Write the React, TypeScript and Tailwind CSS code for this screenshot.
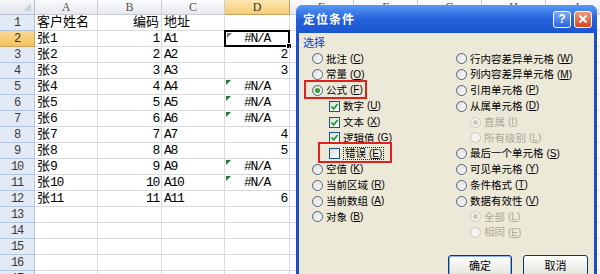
import React from 'react';

const cols = ['A', 'B', 'C', 'D', 'E', 'F', 'G', 'H', 'I'];

const data: string[][] = [
  ['客户姓名', '编码', '地址', ''],
  ['张1', '1', 'A1', '#N/A'],
  ['张2', '2', 'A2', '2'],
  ['张3', '3', 'A3', '3'],
  ['张4', '4', 'A4', '#N/A'],
  ['张5', '5', 'A5', '#N/A'],
  ['张6', '6', 'A6', '#N/A'],
  ['张7', '7', 'A7', '4'],
  ['张8', '8', 'A8', '5'],
  ['张9', '9', 'A9', '#N/A'],
  ['张10', '10', 'A10', '#N/A'],
  ['张11', '11', 'A11', '6'],
];

// ascii runs get squeezed to a half-width look like SimSun
const Txt: React.FC<{ s: string }> = ({ s }) => (
  <>
    {s.split(/([\x00-\x7f]+)/).map((p, i) =>
      /^[\x00-\x7f]+$/.test(p) ? (
        <span key={i} className="tracking-[-1.3px]">{p}</span>
      ) : (
        <span key={i}>{p}</span>
      )
    )}
  </>
);

const Sheet: React.FC = () => {
  const rows = Array.from({ length: 17 }, (_, i) => i + 1);
  return (
    <div className="grid grid-cols-[35px_63px_64px_63px_65px_64px_64px_64px_64px_64px] auto-rows-[16px] grid-rows-[15px] font-['Liberation_Mono','Noto_Sans_CJK_SC',monospace] text-[13px] leading-none text-black">
      {/* corner */}
      <div className="relative bg-gradient-to-b from-[#F4F6F8] to-[#E3E6EA] border-r border-b border-[#B7C3D3]">
        <div className="absolute right-[3px] bottom-[3px] w-0 h-0 border-b-[8px] border-l-[8px] border-b-[#C9D1DB] border-l-transparent" />
      </div>
      {cols.map((c) => (
        <div
          key={c}
          className={`flex items-center justify-center border-r border-b font-['Liberation_Serif',serif] text-[12px] ${
            c === 'D'
              ? 'bg-gradient-to-b from-[#FCE6B3] to-[#F6CB73] border-[#C3A361] text-[#333]'
              : 'bg-gradient-to-b from-[#FAFBFC] to-[#E6E9EE] border-[#C9CDD3] text-[#555]'
          }`}
        >
          {c}
        </div>
      ))}
      {rows.map((r) => {
        const d = data[r - 1] || ['', '', '', ''];
        return (
          <React.Fragment key={r}>
            <div
              className={`flex items-center justify-center border-r border-b text-[12px] ${
                r === 2
                  ? 'bg-gradient-to-b from-[#F9D992] to-[#F3C25E] border-[#C9A45A] text-[#333]'
                  : 'bg-[#E2EAF5] border-[#B4C6DD] text-[#3A3A3A]'
              }`}
            >
              <Txt s={String(r)} />
            </div>
            <div className="flex items-center pl-[2px] border-r border-b border-[#DADCDD]">
              <Txt s={d[0]} />
            </div>
            <div className="flex items-center justify-end pr-[2px] border-r border-b border-[#DADCDD]">
              <Txt s={d[1]} />
            </div>
            <div className="flex items-center pl-[2px] border-r border-b border-[#DADCDD]">
              <Txt s={d[2]} />
            </div>
            <div
              className={`relative flex items-center border-r border-b border-[#DADCDD] ${
                d[3] === '#N/A' ? 'justify-center' : 'justify-end pr-[2px]'
              }`}
            >
              <Txt s={d[3]} />
              {d[3] === '#N/A' && r !== 2 && (
                <div className="absolute left-[1px] top-[1px] w-0 h-0 border-t-[5px] border-r-[5px] border-t-[#1E7A2A] border-r-transparent" />
              )}
              {r === 2 && (
                <>
                  <div className="absolute -left-[1px] -top-[1px] right-[-1px] bottom-[-1px] border-2 border-black" />
                  <div className="absolute left-[2px] top-[2px] w-0 h-0 border-t-[5px] border-r-[5px] border-t-[#6E7B6E] border-r-transparent" />
                  <div className="absolute -right-[3px] -bottom-[3px] w-[6px] h-[6px] bg-black border border-white" />
                </>
              )}
            </div>
            {[0, 1, 2, 3, 4].map((k) => (
              <div key={k} className="border-r border-b border-[#DADCDD]" />
            ))}
          </React.Fragment>
        );
      })}
    </div>
  );
};

const Radio: React.FC<{ on?: boolean; dis?: boolean }> = ({ on, dis }) => (
  <span
    className={`w-[11px] h-[11px] rounded-full border flex items-center justify-center shrink-0 ${
      dis ? 'border-[#CAC8BB] bg-[#F4F3EE]' : 'border-[#4D6185] bg-gradient-to-br from-[#DCDCD7] to-white'
    }`}
  >
    {on && <span className={`w-[5px] h-[5px] rounded-full ${dis ? 'bg-[#CAC8BB]' : 'bg-[#2EA52E]'}`} />}
  </span>
);

const Check: React.FC<{ on?: boolean }> = ({ on }) => (
  <span className="w-[11px] h-[11px] border border-[#1C5180] bg-gradient-to-br from-[#DCDCD7] to-white flex items-center justify-center shrink-0">
    {on && (
      <svg width="9" height="9" viewBox="0 0 9 9">
        <path d="M1.5 4.5 L3.6 6.8 L7.6 2" fill="none" stroke="#21A121" strokeWidth="1.8" />
      </svg>
    )}
  </span>
);

const Label: React.FC<{ t: string; k: string; dis?: boolean; focus?: boolean }> = ({ t, k, dis, focus }) => (
  <span
    className={`ml-[3px] flex items-center whitespace-nowrap ${dis ? 'text-[#ACA899]' : 'text-black'} ${
      focus ? 'border border-dotted border-[#222] px-[1px]' : ''
    }`}
  >
    {t}
    <span className="ml-[3px] text-[10px] font-['Liberation_Sans',sans-serif]">
      (<u>{k}</u>)
    </span>
  </span>
);

type Item = { t: string; k: string; kind: 'r' | 'c'; on?: boolean; dis?: boolean; sub?: boolean; focus?: boolean };

const left: Item[] = [
  { t: '批注', k: 'C', kind: 'r' },
  { t: '常量', k: 'O', kind: 'r' },
  { t: '公式', k: 'F', kind: 'r', on: true },
  { t: '数字', k: 'U', kind: 'c', on: true, sub: true },
  { t: '文本', k: 'X', kind: 'c', on: true, sub: true },
  { t: '逻辑值', k: 'G', kind: 'c', on: true, sub: true },
  { t: '错误', k: 'E', kind: 'c', sub: true, focus: true },
  { t: '空值', k: 'K', kind: 'r' },
  { t: '当前区域', k: 'R', kind: 'r' },
  { t: '当前数组', k: 'A', kind: 'r' },
  { t: '对象', k: 'B', kind: 'r' },
];

const right: Item[] = [
  { t: '行内容差异单元格', k: 'W', kind: 'r' },
  { t: '列内容差异单元格', k: 'M', kind: 'r' },
  { t: '引用单元格', k: 'P', kind: 'r' },
  { t: '从属单元格', k: 'D', kind: 'r' },
  { t: '直属', k: 'I', kind: 'r', on: true, dis: true, sub: true },
  { t: '所有级别', k: 'L', kind: 'r', dis: true, sub: true },
  { t: '最后一个单元格', k: 'S', kind: 'r' },
  { t: '可见单元格', k: 'Y', kind: 'r' },
  { t: '条件格式', k: 'T', kind: 'r' },
  { t: '数据有效性', k: 'V', kind: 'r' },
  { t: '全部', k: 'L', kind: 'r', on: true, dis: true, sub: true },
  { t: '相同', k: 'E', kind: 'r', dis: true, sub: true },
];

const Row: React.FC<{ it: Item; indent: string }> = ({ it, indent }) => (
  <div className={`h-[15.8px] flex items-center ${it.sub ? indent : ''}`}>
    {it.kind === 'r' ? <Radio on={it.on} dis={it.dis} /> : <Check on={it.on} />}
    <Label t={it.t} k={it.k} dis={it.dis} focus={it.focus} />
  </div>
);

const Dialog: React.FC = () => (
  <div className="absolute left-[296px] top-[5px] w-[301px] h-[290px] rounded-t-[7px] bg-[#1A4FC8] flex flex-col overflow-hidden font-['Noto_Sans_CJK_SC',sans-serif]">
    <div className="h-[28px] shrink-0 flex items-center justify-between pl-[7px] pr-[5px] bg-gradient-to-b from-[#5A9AF5] via-[#2462DC] to-[#1A56CF]">
      <span className="text-white font-bold text-[12px] tracking-[1px]">定位条件</span>
      <div className="flex gap-[3px]">
        <div className="w-[18px] h-[17px] rounded-[3px] border border-white bg-gradient-to-b from-[#7EA8F8] to-[#2A62E0] flex items-center justify-center text-white font-bold text-[12px] font-['Liberation_Sans',sans-serif]">
          ?
        </div>
        <div className="w-[18px] h-[17px] rounded-[3px] border border-white bg-gradient-to-b from-[#EE9A7E] to-[#D2421B] flex items-center justify-center">
          <svg width="10" height="10" viewBox="0 0 10 10">
            <path d="M1.5 1.5 L8.5 8.5 M8.5 1.5 L1.5 8.5" stroke="white" strokeWidth="2" />
          </svg>
        </div>
      </div>
    </div>
    <div className="mx-[3px] flex-1 bg-[#ECE9D8] text-[10.5px] leading-none">
      <div className="pl-[4px] pt-[2px] h-[16px] flex items-center text-[11px] text-[#0046D5]">选择</div>
      <div className="flex mt-[2px]">
        <div className="w-[157px] pl-[13px] flex flex-col">
          {left.map((it, i) => (
            <Row key={i} it={it} indent="pl-[17px]" />
          ))}
        </div>
        <div className="flex flex-col">
          {right.map((it, i) => (
            <Row key={i} it={it} indent="pl-[14px]" />
          ))}
        </div>
      </div>
      <div className="flex justify-end gap-[11px] pr-[6px] mt-[14px]">
        <button className="w-[64px] h-[21px] rounded-[3px] border border-[#003C74] bg-gradient-to-b from-white to-[#E5E4DD] shadow-[inset_0_0_0_1px_#8FB2F0] text-[11px] text-black">
          确定
        </button>
        <button className="w-[65px] h-[21px] rounded-[3px] border border-[#003C74] bg-gradient-to-b from-white to-[#E5E4DD] text-[11px] text-black">
          取消
        </button>
      </div>
    </div>
    {/* red annotation boxes */}
    <div className="absolute left-[8px] top-[75px] w-[63px] h-[19px] border-2 border-[#E0201C]" />
    <div className="absolute left-[22px] top-[137px] w-[74px] h-[21px] border-2 border-[#E0201C]" />
  </div>
);

export default function App() {
  return (
    <div className="relative w-[600px] h-[274px] overflow-hidden bg-white">
      <Sheet />
      <Dialog />
    </div>
  );
}
